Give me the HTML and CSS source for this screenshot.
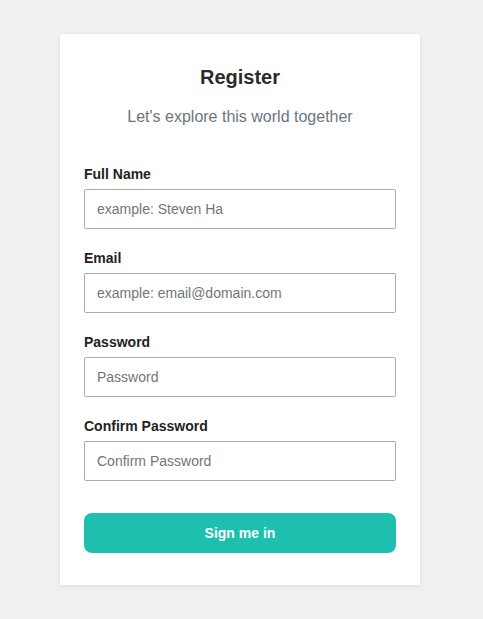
FILE: index.html
```html
<!DOCTYPE html>
<html>
<head>
<meta charset="utf-8">
<link rel="stylesheet" href="styles.css">
</head>
<body>
<div class="page">
  <form class="card">
    <h1 class="title">Register</h1>
    <p class="subtitle">Let's explore this world together</p>
    <div class="field">
      <label class="label">Full Name</label>
      <input class="input" type="text" placeholder="example: Steven Ha">
    </div>
    <div class="field">
      <label class="label">Email</label>
      <input class="input" type="text" placeholder="example: email@domain.com">
    </div>
    <div class="field">
      <label class="label">Password</label>
      <input class="input" type="password" placeholder="Password">
    </div>
    <div class="field">
      <label class="label">Confirm Password</label>
      <input class="input" type="password" placeholder="Confirm Password">
    </div>
    <button class="btn" type="button">Sign me in</button>
  </form>
</div>
</body>
</html>
```
FILE: styles.css
```css
* { box-sizing: border-box; }
html, body { margin: 0; padding: 0; }
body {
  background: #f0f0f0;
  font-family: "Liberation Sans", Arial, sans-serif;
  width: 483px;
  height: 619px;
  overflow: hidden;
}
.page {
  display: flex;
  justify-content: center;
  padding-top: 34px;
  padding-right: 3px;
}
.card {
  width: 360px;
  background: #fff;
  border-radius: 2px;
  box-shadow: 0 1px 4px rgba(0,0,0,0.08);
  padding: 31px 24px 32px;
  display: flex;
  flex-direction: column;
}
.title {
  margin: 0;
  text-align: center;
  font-size: 20px;
  line-height: 24px;
  font-weight: 700;
  color: #2b2b2b;
}
.subtitle {
  margin: 18px 0 39px;
  text-align: center;
  font-size: 16px;
  line-height: 20px;
  color: #6c757d;
}
.field {
  display: flex;
  flex-direction: column;
  margin-bottom: 21px;
}
.label {
  font-size: 14px;
  line-height: 16px;
  font-weight: 700;
  color: #222;
  margin-bottom: 7px;
}
.input {
  height: 40px;
  border: 1px solid #aaa;
  border-radius: 2px;
  padding: 0 12px;
  font-family: "Liberation Sans", Arial, sans-serif;
  font-size: 14px;
  color: #212529;
  outline: none;
}
.input::placeholder { color: #757575; }
.btn {
  margin-top: 11px;
  height: 40px;
  border: none;
  border-radius: 8px;
  background: #1ebfae;
  color: #fff;
  font-family: "Liberation Sans", Arial, sans-serif;
  font-size: 14px;
  font-weight: 700;
}
```
